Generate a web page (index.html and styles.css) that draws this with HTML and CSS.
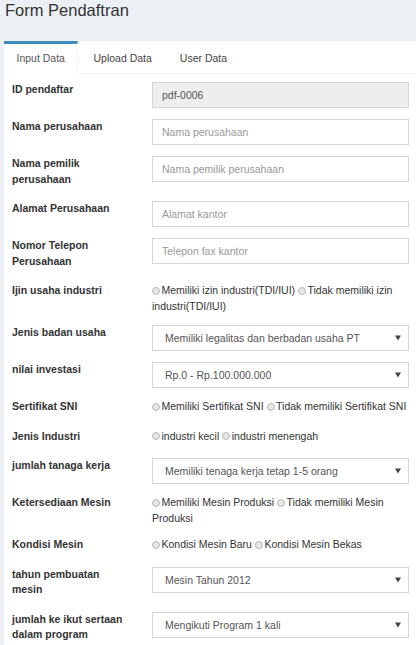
FILE: index.html
```html
<!DOCTYPE html>
<html>
<head>
<meta charset="utf-8">
<title>Form Pendaftran</title>
<link rel="stylesheet" href="styles.css">
</head>
<body>
<div class="content-header">
  <h1>Form Pendaftran</h1>
</div>
<div class="tabs-box">
  <ul class="nav-tabs">
    <li class="tab active">Input Data</li>
    <li class="tab">Upload Data</li>
    <li class="tab">User Data</li>
  </ul>
  <form class="tab-content">
    <div class="row">
      <label class="lbl">ID pendaftar</label>
      <input class="ctrl disabled" type="text" value="pdf-0006" disabled>
    </div>
    <div class="row">
      <label class="lbl">Nama perusahaan</label>
      <input class="ctrl" type="text" placeholder="Nama perusahaan">
    </div>
    <div class="row">
      <label class="lbl">Nama pemilik perusahaan</label>
      <input class="ctrl" type="text" placeholder="Nama pemilik perusahaan">
    </div>
    <div class="row">
      <label class="lbl">Alamat Perusahaan</label>
      <input class="ctrl" type="text" placeholder="Alamat kantor">
    </div>
    <div class="row">
      <label class="lbl">Nomor Telepon Perusahaan</label>
      <input class="ctrl" type="text" placeholder="Telepon fax kantor">
    </div>
    <div class="row">
      <label class="lbl">Ijin usaha industri</label>
      <div class="radios"><input type="radio" name="ijin" id="ijin1"><span class="opt">Memiliki izin industri(TDI/IUI)</span> <input type="radio" name="ijin" id="ijin2"><span class="opt">Tidak memiliki izin industri(TDI/IUI)</span></div>
    </div>
    <div class="row">
      <label class="lbl">Jenis badan usaha</label>
      <div class="ctrl select"><span>Memiliki legalitas dan berbadan usaha PT</span><svg class="arrow" width="6" height="6" viewBox="0 0 6 6"><path d="M0 0.5H6L3 5.5Z" fill="#444"/></svg></div>
    </div>
    <div class="row">
      <label class="lbl">nilai investasi</label>
      <div class="ctrl select"><span>Rp.0 - Rp.100.000.000</span><svg class="arrow" width="6" height="6" viewBox="0 0 6 6"><path d="M0 0.5H6L3 5.5Z" fill="#444"/></svg></div>
    </div>
    <div class="row">
      <label class="lbl">Sertifikat SNI</label>
      <div class="radios"><input type="radio" name="sni"><span class="opt">Memiliki Sertifikat SNI</span> <input type="radio" name="sni"><span class="opt">Tidak memiliki Sertifikat SNI</span></div>
    </div>
    <div class="row">
      <label class="lbl">Jenis Industri</label>
      <div class="radios"><input type="radio" name="jenis"><span class="opt">industri kecil</span> <input type="radio" name="jenis"><span class="opt">industri menengah</span></div>
    </div>
    <div class="row">
      <label class="lbl">jumlah tanaga kerja</label>
      <div class="ctrl select"><span>Memiliki tenaga kerja tetap 1-5 orang</span><svg class="arrow" width="6" height="6" viewBox="0 0 6 6"><path d="M0 0.5H6L3 5.5Z" fill="#444"/></svg></div>
    </div>
    <div class="row">
      <label class="lbl">Ketersediaan Mesin</label>
      <div class="radios"><input type="radio" name="mesin"><span class="opt">Memiliki Mesin Produksi</span> <input type="radio" name="mesin"><span class="opt">Tidak memiliki Mesin Produksi</span></div>
    </div>
    <div class="row">
      <label class="lbl">Kondisi Mesin</label>
      <div class="radios"><input type="radio" name="kondisi"><span class="opt">Kondisi Mesin Baru</span> <input type="radio" name="kondisi"><span class="opt">Kondisi Mesin Bekas</span></div>
    </div>
    <div class="row">
      <label class="lbl">tahun pembuatan mesin</label>
      <div class="ctrl select"><span>Mesin Tahun 2012</span><svg class="arrow" width="6" height="6" viewBox="0 0 6 6"><path d="M0 0.5H6L3 5.5Z" fill="#444"/></svg></div>
    </div>
    <div class="row">
      <label class="lbl">jumlah ke ikut sertaan dalam program</label>
      <div class="ctrl select"><span>Mengikuti Program 1 kali</span><svg class="arrow" width="6" height="6" viewBox="0 0 6 6"><path d="M0 0.5H6L3 5.5Z" fill="#444"/></svg></div>
    </div>
  </form>
</div>
</body>
</html>
```

FILE: styles.css
```css
html, body {
  margin: 0;
  padding: 0;
}
body {
  background: #ecf0f5;
  font-family: "Liberation Sans", Arial, sans-serif;
  color: #333;
  overflow: hidden;
}
.content-header {
  height: 41px;
  box-sizing: border-box;
  padding: 1px 5px 0;
}
.content-header h1 {
  margin: 0;
  font-size: 16.5px;
  line-height: 18px;
  font-weight: normal;
  color: #333;
}
.tabs-box {
  margin-left: 4px;
  background: #fff;
  min-height: 620px;
}
.nav-tabs {
  list-style: none;
  margin: 0;
  padding: 0;
  display: flex;
  border-bottom: 1px solid #f4f4f4;
  height: 32px;
}
.tab {
  box-sizing: border-box;
  height: 32px;
  padding: 0 13px 0 13px;
  margin-right: 2px;
  border-top: 3px solid transparent;
  font-size: 10.5px;
  line-height: 28px;
  color: #444;
}
.tab.active {
  border-top-color: #3c8dbc;
  border-right: 1px solid #f4f4f4;
  height: 33px;
  background: #fff;
  color: #555;
  padding: 0 12.5px 0 12.5px;
}
.tab-content {
  padding: 8px 7px 0 8px;
  margin: 0;
}
.row {
  display: grid;
  grid-template-columns: 118px 257px;
  column-gap: 22px;
  margin-bottom: 11px;
  align-items: start;
}
.lbl {
  font-size: 10.5px;
  font-weight: bold;
  line-height: 15.5px;
  padding-bottom: 3px;
  color: #333;
}
.ctrl {
  box-sizing: border-box;
  height: 26px;
  width: 257px;
  border: 1px solid #d2d6de;
  border-radius: 0;
  background: #fff;
  font-family: "Liberation Sans", Arial, sans-serif;
  font-size: 10.5px;
  color: #555;
  padding: 0 9px;
  margin: 0;
  outline: none;
}
.ctrl::placeholder {
  color: #999;
}
.ctrl.disabled {
  background: #eee;
  color: #555;
}
.select {
  display: flex;
  align-items: center;
  padding: 0 7px 0 12px;
}
.select span {
  flex: 1;
}
.arrow {
  flex: none;
}
.radios {
  font-size: 10.5px;
  line-height: 15.5px;
  color: #333;
}
.radios input {
  appearance: none;
  -webkit-appearance: none;
  width: 8px;
  height: 8px;
  margin: 0 1.5px 0 0;
  border: 1px solid #b8b8b8;
  border-radius: 50%;
  background: #e6e6e6;
  box-sizing: border-box;
  vertical-align: -0.5px;
}
```
